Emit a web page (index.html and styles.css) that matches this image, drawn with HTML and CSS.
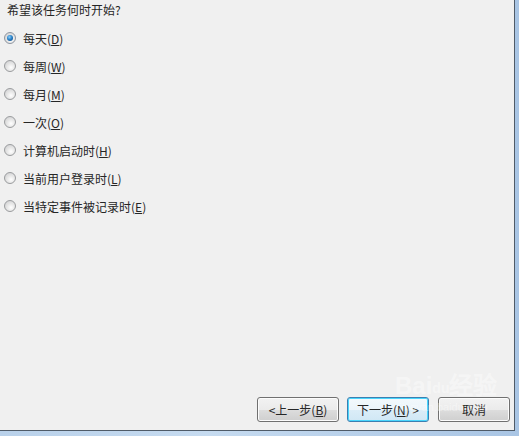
FILE: index.html
```html
<!DOCTYPE html>
<html lang="zh-CN">
<head>
<meta charset="utf-8">
<title>任务触发器</title>
<link rel="stylesheet" href="styles.css">
</head>
<body>
<div class="frame">
  <div class="dialog">
    <div class="title">希望该任务何时开始?</div>
    <div class="options">
      <label class="opt"><span class="radio checked"></span><span>每天(<u>D</u>)</span></label>
      <label class="opt"><span class="radio"></span><span>每周(<u>W</u>)</span></label>
      <label class="opt"><span class="radio"></span><span>每月(<u>M</u>)</span></label>
      <label class="opt"><span class="radio"></span><span>一次(<u>O</u>)</span></label>
      <label class="opt"><span class="radio"></span><span>计算机启动时(<u>H</u>)</span></label>
      <label class="opt"><span class="radio"></span><span>当前用户登录时(<u>L</u>)</span></label>
      <label class="opt"><span class="radio"></span><span>当特定事件被记录时(<u>E</u>)</span></label>
    </div>
    <div class="footer">
      <button class="btn back">&lt;上一步(<u>B</u>)</button>
      <button class="btn next">下一步(<u>N</u>) &gt;</button>
      <button class="btn cancel">取消</button>
      <div class="watermark">
        <span class="wm-big">Bai<span class="paw">du</span>经验</span>
        <span class="wm-small">jingyan.baidu.com</span>
      </div>
    </div>
  </div>
</div>
</body>
</html>
```
FILE: styles.css
```css
html, body {
  margin: 0;
  padding: 0;
}
body {
  width: 519px;
  height: 436px;
  overflow: hidden;
  background: linear-gradient(90deg, #b9d1ea 0%, #c6dbf0 40%, #a9c5e4 100%);
  font-family: "Noto Sans CJK SC", "Microsoft YaHei", sans-serif;
  font-size: 12px;
  color: #262626;
}
.frame {
  width: 519px;
  height: 436px;
  display: flex;
  align-items: flex-start;
}
.dialog {
  box-sizing: border-box;
  width: 515px;
  height: 431px;
  background: #f0f0f0;
  border-right: 1px solid #4f5b68;
  border-bottom: 1px solid #4f5b68;
  display: flex;
  flex-direction: column;
}
.title {
  height: 20px;
  line-height: 20px;
  padding-left: 7px;
}
.options {
  padding-top: 4px;
  display: flex;
  flex-direction: column;
}
.opt {
  height: 28px;
  display: flex;
  align-items: center;
  gap: 7px;
  padding-left: 4px;
}
.opt u, .btn u {
  text-decoration: underline;
  text-underline-offset: 1px;
}
.radio {
  box-sizing: border-box;
  width: 12px;
  height: 12px;
  border-radius: 50%;
  border: 1px solid #9a9c9e;
  background: radial-gradient(circle at 60% 65%, #ffffff 0%, #e6e6e6 45%, #c9cacb 100%);
  position: relative;
  flex: none;
}
.radio.checked {
  border-color: #8d95a0;
}
.radio.checked::after {
  content: "";
  position: absolute;
  left: 2px;
  top: 2px;
  width: 6px;
  height: 6px;
  border-radius: 50%;
  background: radial-gradient(circle at 40% 35%, #8fd0fa 0%, #2a83c9 45%, #0d3f78 100%);
}
.footer {
  margin-top: auto;
  display: flex;
  justify-content: flex-end;
  align-items: flex-end;
  padding: 0 4px 8px 0;
  position: relative;
}
.btn {
  box-sizing: border-box;
  height: 25px;
  width: 82px;
  margin: 0;
  padding: 0;
  font-family: inherit;
  font-size: 12px;
  color: #262626;
  border: 1px solid #707070;
  border-radius: 3px;
  box-shadow: inset 0 0 0 1px #fcfcfc;
  background: linear-gradient(180deg, #f2f2f2 0%, #ebebeb 50%, #dddddd 51%, #cfcfcf 100%);
}
.back {
  margin-right: 8px;
}
.next {
  margin-right: 9px;
  border-color: #3c7fb1;
  box-shadow: inset 0 0 0 1px #48d5fc;
  background: linear-gradient(180deg, #f3f9fc 0%, #ebf4fa 50%, #dbedf8 51%, #d0e7f5 100%);
}
.cancel {
  width: 72px;
}
.watermark {
  position: absolute;
  left: 395px;
  top: -24px;
  display: flex;
  flex-direction: column;
  align-items: flex-start;
  color: rgba(255, 255, 255, 0.4);
  pointer-events: none;
  font-family: "Liberation Sans", sans-serif;
}
.wm-big {
  font-size: 24px;
  font-weight: bold;
  line-height: 26px;
}
.paw {
  font-size: 14px;
  vertical-align: middle;
}
.wm-small {
  font-size: 11px;
  line-height: 12px;
  padding-left: 4px;
}
```
